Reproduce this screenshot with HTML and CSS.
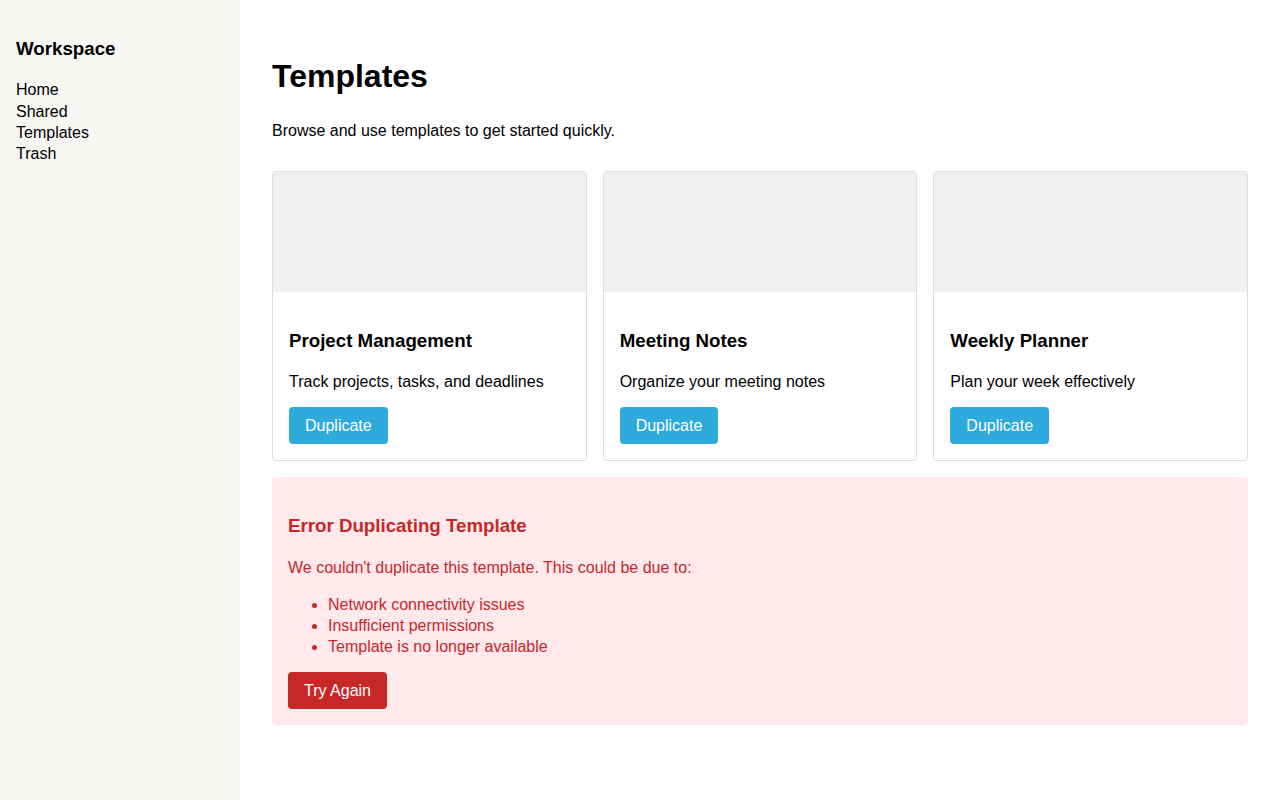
FILE: index.html
```html
<!DOCTYPE html>
<html lang="en">
<head>
<meta charset="utf-8">
<title>Templates</title>
<link rel="stylesheet" href="styles.css">
</head>
<body>
<div class="app">
  <aside class="sidebar">
    <h3 class="brand">Workspace</h3>
    <ul class="nav">
      <li><a href="#">Home</a></li>
      <li><a href="#">Shared</a></li>
      <li><a href="#">Templates</a></li>
      <li><a href="#">Trash</a></li>
    </ul>
  </aside>
  <main class="main">
    <h1 class="title">Templates</h1>
    <p class="subtitle">Browse and use templates to get started quickly.</p>
    <div class="grid">
      <div class="card">
        <div class="thumb"></div>
        <div class="card-body">
          <h3>Project Management</h3>
          <p>Track projects, tasks, and deadlines</p>
          <button class="btn btn-blue">Duplicate</button>
        </div>
      </div>
      <div class="card">
        <div class="thumb"></div>
        <div class="card-body">
          <h3>Meeting Notes</h3>
          <p>Organize your meeting notes</p>
          <button class="btn btn-blue">Duplicate</button>
        </div>
      </div>
      <div class="card">
        <div class="thumb"></div>
        <div class="card-body">
          <h3>Weekly Planner</h3>
          <p>Plan your week effectively</p>
          <button class="btn btn-blue">Duplicate</button>
        </div>
      </div>
    </div>
    <div class="error">
      <h3>Error Duplicating Template</h3>
      <p>We couldn't duplicate this template. This could be due to:</p>
      <ul>
        <li>Network connectivity issues</li>
        <li>Insufficient permissions</li>
        <li>Template is no longer available</li>
      </ul>
      <button class="btn btn-red">Try Again</button>
    </div>
  </main>
</div>
</body>
</html>
```

FILE: styles.css
```css
html, body {
  margin: 0;
  padding: 0;
  height: 100%;
}
body {
  font-family: "Liberation Sans", Arial, sans-serif;
  font-size: 16px;
  line-height: 1.33;
  color: #000;
  background: #fff;
}
.app {
  display: flex;
  min-height: 100vh;
}
.sidebar {
  width: 240px;
  flex: 0 0 240px;
  box-sizing: border-box;
  padding: 18px 16px 16px;
  background: #f7f6f3;
}
.brand {
  font-size: 18.72px;
  font-weight: 700;
  margin: 18.72px 0 17.72px;
}
.nav {
  list-style: none;
  margin: 0;
  padding: 0;
}
.nav a {
  color: #000;
  text-decoration: none;
}
.main {
  flex: 1;
  padding: 32px;
  min-width: 0;
}
.title {
  font-size: 32px;
  font-weight: 700;
  margin: 21.44px 0 22.44px;
  line-height: 1.33;
  padding-top: 2px;
}
.subtitle {
  margin: 16px 0;
}
.grid {
  display: grid;
  grid-template-columns: repeat(3, 1fr);
  gap: 16px;
  margin: 29px 0 16px;
}
.card {
  border: 1px solid #ddd;
  border-radius: 4px;
  overflow: hidden;
  background: #fff;
}
.thumb {
  height: 120px;
  background: #f0f0f0;
}
.card-body {
  padding: 16px;
}
.card-body h3,
.error h3 {
  font-size: 18.72px;
  font-weight: 700;
}
.card-body h3 {
  margin: 21.72px 0 16.72px;
}
.card-body p {
  margin: 16px 0 15px;
}
.btn {
  font-family: inherit;
  font-size: 16px;
  line-height: 21px;
  padding: 8px 16px;
  border: none;
  border-radius: 4px;
  color: #fff;
  cursor: pointer;
  display: block;
}
.btn-blue {
  background: #2eaadc;
}
.btn-red {
  background: #c62828;
}
.error {
  background: #ffe9ec;
  color: #c62828;
  border-radius: 4px;
  padding: 16px;
}
.error h3 {
  margin: 20.72px 0 17.72px;
}
.error p {
  margin: 16px 0;
}
.error ul {
  margin: 16px 0 14px;
  padding-left: 40px;
}
```
